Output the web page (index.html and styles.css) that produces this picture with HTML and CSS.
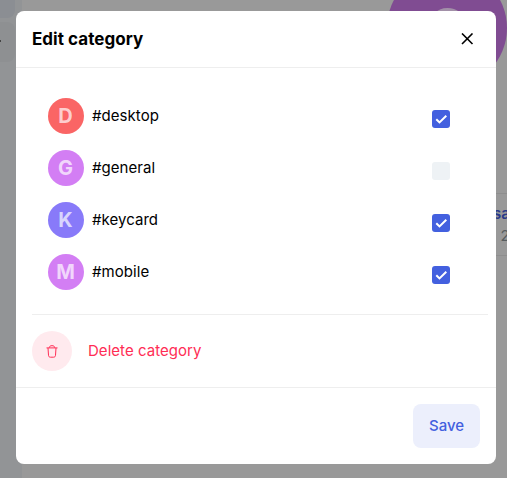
FILE: index.html
```html
<!DOCTYPE html>
<html lang="en">
<head>
<meta charset="utf-8">
<title>Edit category</title>
<link rel="stylesheet" href="styles.css">
</head>
<body>
<div class="backdrop">
  <aside class="sidebar"><div class="tile tile-top"></div><div class="tile"><span class="tile-mark"></span></div></aside>
  <div class="community">G</div>
  <div class="message"><span class="sender">sa</span><span class="count">2</span></div>
</div>
<main class="modal">
  <header class="header">
    <h1 class="title">Edit category</h1>
    <button class="close" aria-label="Close"><svg width="13" height="12" viewBox="0 0 13 12"><path d="M1 .5l10.500 10.500M11.500 .5L1 11"/></svg></button>
  </header>
  <section class="body">
    <ul class="channels">
      <li class="channel"><span class="avatar red">D</span><span class="name">#desktop</span><span class="check on"><svg viewBox="0 0 18 18"><path d="M4.300 9.200l3.200 3.200 6.800-6.700"/></svg></span></li>
      <li class="channel"><span class="avatar pink">G</span><span class="name">#general</span><span class="check"></span></li>
      <li class="channel"><span class="avatar violet">K</span><span class="name">#keycard</span><span class="check on"><svg viewBox="0 0 18 18"><path d="M4.300 9.200l3.200 3.200 6.800-6.700"/></svg></span></li>
      <li class="channel"><span class="avatar pink">M</span><span class="name">#mobile</span><span class="check on"><svg viewBox="0 0 18 18"><path d="M4.300 9.200l3.200 3.200 6.800-6.700"/></svg></span></li>
    </ul>
    <div class="delete">
      <span class="trash"><svg width="12" height="13" viewBox="0 0 12 13"><path d="M.5 2.900h11M3.300 2.700C3.500 1.200 4.200.7 6 .7s2.500.5 2.700 2M2 3l.5 7.300c.1 1.300.8 1.900 2 1.900h3c1.200 0 1.900-.6 2-1.900L10 3"/></svg></span>
      <span>Delete category</span>
    </div>
  </section>
  <footer class="footer"><button class="save">Save</button></footer>
</main>
</body>
</html>
```

FILE: styles.css
```css
* { box-sizing: border-box; }
body {
  margin: 0;
  height: 478px;
  padding: 11px 11px 14px 16px;
  overflow: hidden;
  background: #999;
  font-family: Inter, "Liberation Sans", sans-serif;
  font-size: 15px;
  line-height: 22px;
  color: #000;
}
button { border: 0; padding: 0; font: inherit; }
.backdrop { position: absolute; inset: 0; overflow: hidden; }
.sidebar { width: 22px; height: 100%; background: #929496; }
.tile { width: 15px; height: 40px; border-radius: 0 8px 8px 0; background: #8e9092; padding-top: 18px; }
.tile-top { height: 13px; margin-bottom: 4px; background: #8b8e93; border-radius: 0 0 8px 0; }
.tile-mark { display: block; width: 1px; height: 2px; background: #444; }
.community {
  position: absolute;
  left: 387px;
  top: -32px;
  width: 120px;
  height: 120px;
  border-radius: 50%;
  background: #804c92;
  color: #a290a8;
  font-size: 56px;
  font-weight: 700;
  line-height: 124px;
  text-align: center;
}
.message {
  position: absolute;
  left: 480px;
  top: 193px;
  width: 60px;
  height: 63px;
  border: solid #8e8e8e;
  border-width: 1px 0;
}
.sender { position: absolute; left: 13px; top: 9px; color: #29398a; font-weight: 600; }
.count { position: absolute; left: 20.5px; top: 31px; color: #585d60; }
.modal {
  position: relative;
  display: flex;
  flex-direction: column;
  width: 480px;
  height: 453px;
  background: #fff;
  border-radius: 8px;
}
.header {
  display: flex;
  align-items: center;
  justify-content: space-between;
  height: 57px;
  padding: 0 22px 0 16px;
  border-bottom: 1px solid #eee;
}
.title { margin: 0; font-size: 17px; line-height: 24px; font-weight: 700; letter-spacing: .04px; }
.close { display: flex; background: none; }
.close svg { fill: none; stroke: #000; stroke-width: 1.6; }
.body { height: 319px; padding: 22px 8px 0 16px; }
.channels { list-style: none; margin: 0; padding: 0 38px 16px 16px; border-bottom: 1px solid #eee; }
.channel { display: flex; align-items: center; height: 52px; }
.avatar {
  width: 36px;
  height: 36px;
  padding-right: 1px;
  border-radius: 50%;
  color: rgba(255, 255, 255, .7);
  font-size: 20px;
  font-weight: 700;
  line-height: 36px;
  text-align: center;
}
.red { background: #fa6565; }
.pink { background: #d37ef4; }
.violet { background: #887af9; }
.name { flex: 1; margin-left: 8px; letter-spacing: .05px; }
.check { width: 18px; height: 18px; margin-top: 6px; border-radius: 3px; background: #eef2f5; }
.check { height: 18.500px; }
.on { background: #4360df; }
.check svg { display: block; fill: none; stroke: #fff; stroke-width: 2; }
.delete { display: flex; align-items: center; gap: 16px; height: 72px; color: #ff2d55; letter-spacing: .04px; }
.trash { display: flex; align-items: center; justify-content: center; width: 40px; height: 40px; border-radius: 50%; background: #ffeaee; }
.trash svg { fill: none; stroke: #ff2d55; stroke-width: 1; }
.footer { display: flex; justify-content: flex-end; padding: 16px; border-top: 1px solid #eee; }
.save { width: 67px; height: 44px; border-radius: 8px; background: #ecefFc; color: #4360df; font-weight: 500; }
```
